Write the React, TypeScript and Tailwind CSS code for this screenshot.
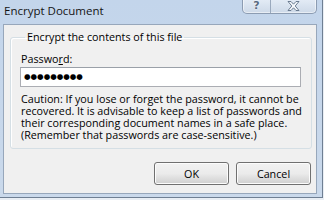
export default function App() {
  const font = { fontFamily: '"Open Sans", "Noto Sans", Arial, sans-serif' };
  return (
    <div className="w-[324px] h-[200px] overflow-hidden bg-[#e9eef4]" style={font}>
      <div className="w-[323px] h-[198px] bg-gradient-to-b from-[#c3d5eb] to-[#cad9eb] border-r border-b border-[#6f7f93] flex flex-col">
        <div className="h-[24px] flex items-start shrink-0">
          <span className="pl-[4px] pt-[3px] text-[11.5px] leading-[15px] text-[#141414]">Encrypt Document</span>
          <div className="ml-auto mr-[5px] flex h-[15px] -mt-[1px] rounded-b-[5px] border border-t-0 border-[#8c9cb2] bg-gradient-to-b from-[#e4ecf6] to-[#cdd9e8] shadow-[inset_0_0_0_1px_rgba(255,255,255,0.5)] overflow-hidden">
            <div className="w-[28px] flex items-center justify-center border-r border-[#9aa9bd]">
              <span className="text-[11px] leading-[12px] font-bold text-[#5a6b81] [text-shadow:0_0_2px_#fff]" style={{ fontFamily: '"DejaVu Sans", sans-serif' }}>?</span>
            </div>
            <div className="w-[45px] flex items-center justify-center">
              <svg width="13" height="10" viewBox="0 0 13 10">
                <path
                  d="M1 0.5 H4 L6.5 3.2 L9 0.5 H12 L8.2 5 L12 9.5 H9 L6.5 6.8 L4 9.5 H1 L4.8 5 Z"
                  fill="#f4f7fb"
                  stroke="#5f7087"
                  strokeWidth="0.9"
                  strokeLinejoin="round"
                />
              </svg>
            </div>
          </div>
        </div>
        <div className="ml-[3px] mr-[5px] h-[170px] border border-[#97a7bb] bg-[#f0f0f0] flex flex-col">
          <fieldset className="ml-[6px] mr-[5px] mt-[6px] border border-[#d5dfe5] rounded-[3px] px-[9px] pb-[7px] shadow-[inset_1px_1px_0_#fff]">
            <legend className="ml-[5px] px-[2px] text-[10.75px] leading-[12px] text-black">Encrypt the contents of this file</legend>
            <div className="mt-[10px] pl-[1px] text-[10.75px] leading-[12px] text-black">
              Passwo<span className="underline underline-offset-[1px]">r</span>d:
            </div>
            <div className="mt-[2px] h-[20px] w-[281px] border border-[#abadb3] border-t-[#9aa0a8] bg-white flex items-center pl-[3px]">
              <span className="text-[7.5px] leading-[8px] text-black" style={{ fontFamily: '"DejaVu Sans", sans-serif' }}>●●●●●●●●●</span>
            </div>
            <p className="mt-[6px] pl-[1px] text-[10.75px] leading-[12px] text-black whitespace-nowrap">
              Caution: If you lose or forget the password, it cannot be
              <br />
              recovered. It is advisable to keep a list of passwords and
              <br />
              their corresponding document names in a safe place.
              <br />
              (Remember that passwords are case-sensitive.)
            </p>
          </fieldset>
          <div className="mt-[13px] flex justify-end gap-[7px] pr-[5px]">
            <button className="w-[75px] h-[23px] rounded-[3px] border border-[#707070] bg-gradient-to-b from-[#f2f2f2] via-[#ebebeb] to-[#cfcfcf] shadow-[inset_0_0_0_1px_#fcfcfc] text-[10.75px] leading-[12px] text-black">
              OK
            </button>
            <button className="w-[75px] h-[23px] rounded-[3px] border border-[#707070] bg-gradient-to-b from-[#f2f2f2] via-[#ebebeb] to-[#cfcfcf] shadow-[inset_0_0_0_1px_#fcfcfc] text-[10.75px] leading-[12px] text-black">
              Cancel
            </button>
          </div>
        </div>
      </div>
    </div>
  );
}
